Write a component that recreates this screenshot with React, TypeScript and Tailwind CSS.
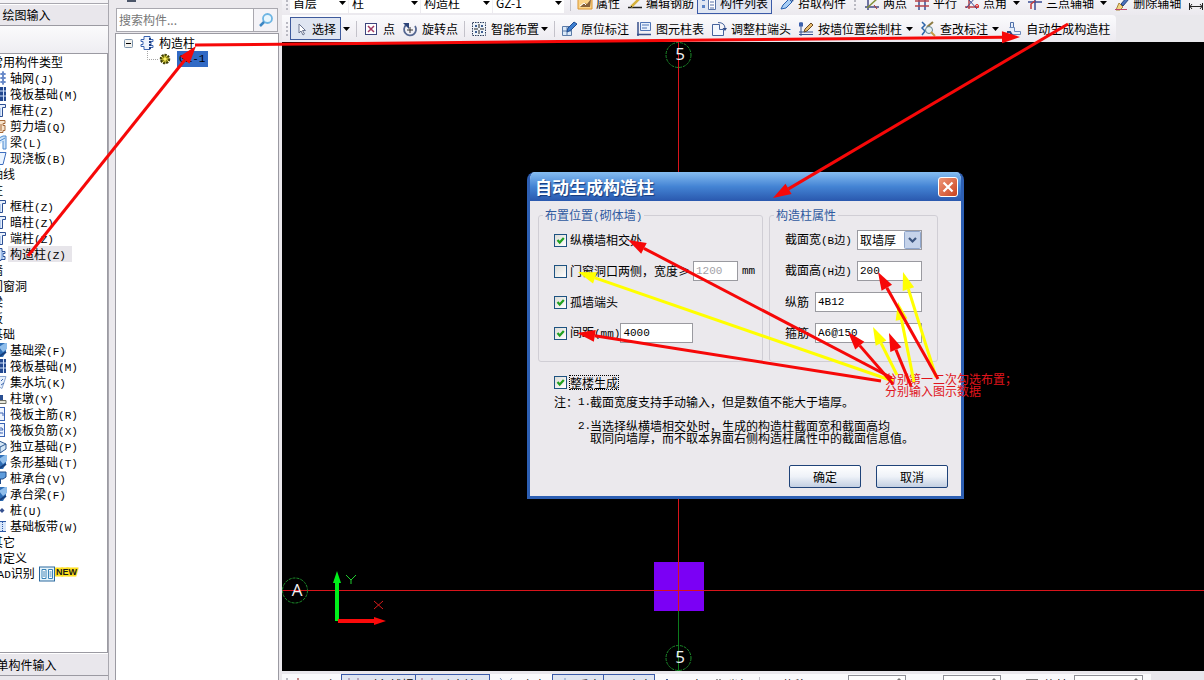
import React from "react";

type IconName =
  | "grid" | "slab" | "column" | "wall" | "beam" | "plate" | "struct" | "solid" | "pit" | "pier"
  | "bar" | "bar2" | "iso" | "cap" | "pile" | "band";

type Row = { text: string; keyName?: string; icon?: IconName; selected?: boolean; isNew?: boolean };

const ROWS: Row[] = [
  { text: "常用构件类型" },
  { text: "轴网", keyName: "J", icon: "grid" },
  { text: "筏板基础", keyName: "M", icon: "slab" },
  { text: "框柱", keyName: "Z", icon: "column" },
  { text: "剪力墙", keyName: "Q", icon: "wall" },
  { text: "梁", keyName: "L", icon: "beam" },
  { text: "现浇板", keyName: "B", icon: "plate" },
  { text: "轴线" },
  { text: "柱" },
  { text: "框柱", keyName: "Z", icon: "column" },
  { text: "暗柱", keyName: "Z", icon: "column" },
  { text: "端柱", keyName: "Z", icon: "column" },
  { text: "构造柱", keyName: "Z", icon: "struct", selected: true },
  { text: "墙" },
  { text: "门窗洞" },
  { text: "梁" },
  { text: "板" },
  { text: "基础" },
  { text: "基础梁", keyName: "F", icon: "solid" },
  { text: "筏板基础", keyName: "M", icon: "slab" },
  { text: "集水坑", keyName: "K", icon: "pit" },
  { text: "柱墩", keyName: "Y", icon: "pier" },
  { text: "筏板主筋", keyName: "R", icon: "bar" },
  { text: "筏板负筋", keyName: "X", icon: "bar2" },
  { text: "独立基础", keyName: "P", icon: "iso" },
  { text: "条形基础", keyName: "T", icon: "solid" },
  { text: "桩承台", keyName: "V", icon: "cap" },
  { text: "承台梁", keyName: "F", icon: "solid" },
  { text: "桩", keyName: "U", icon: "pile" },
  { text: "基础板带", keyName: "W", icon: "band" },
  { text: "其它" },
  { text: "自定义" },
  { text: "识别", isNew: true },
];

function Svg({ children, className = "" }: { children: React.ReactNode; className?: string }) {
  return (
    <svg viewBox="0 0 16 16" className={"size-4 shrink-0 " + className} fill="none" aria-hidden="true">
      {children}
    </svg>
  );
}

function TreeIcon({ name }: { name: IconName }) {
  switch (name) {
    case "grid":
      return <Svg><path d="M4 1v14M8 1v14M12 1v14M2 4h13M2 8h13M2 12h13" stroke="#3f68b8" /><path d="M11 3h2v2h-2zM11 7h2v2h-2zM11 11h2v2h-2z" stroke="#3f68b8" fill="#dbe6fa" /></Svg>;
    case "slab":
      return <Svg><rect x="1" y="1" width="14" height="14" fill="#23488f" /><path d="M4 1v14M8.500 1v14M12.500 1v14M1 5h14M1 10h14" stroke="#cfe0fb" /></Svg>;
    case "column":
      return <Svg><path d="M2.500 2.500h12v3h-3v9h-5v-9h-4z" fill="#e8f0fc" stroke="#2c4f94" /><path d="M9 6v8" stroke="#7ea5e0" /></Svg>;
    case "wall":
      return <Svg><path d="M2 2.500h12v3h-2v2h2v5h-2v2H2z" fill="#f7e3cc" stroke="#a4683a" /><path d="M10 6v7" stroke="#a4683a" /></Svg>;
    case "beam":
      return <Svg><path d="M4 15V6l8-4h3v13h-3V7" fill="#cfe4f9" stroke="#4c8ad0" /><path d="M5 9l9-5" stroke="#4c8ad0" /></Svg>;
    case "plate":
      return <Svg><path d="M3 2.500h12l-3 12H3z" fill="#eaf4ff" stroke="#3c6dbe" /></Svg>;
    case "struct":
      return <Svg><path d="M5 2.500h6v3h3v2h-2v3h2v3h-4v1H5v-3H2v-4h3z" fill="#cfe1f8" stroke="#2c5298" /><path d="M8 4v10M11 6v7" stroke="#6e97d8" /></Svg>;
    case "solid":
      return <Svg><path d="M1 1h14v9l-3 5H4z" fill="#2f6fb7" /><path d="M8 5l6-4h2v6l-4 3z" fill="#8fbdea" /><path d="M9 14l6-4" stroke="#173f7c" strokeWidth="2" /></Svg>;
    case "pit":
      return <Svg><path d="M4 2.500h11l-4 12-7-4z" fill="#e6effb" stroke="#8aa4cf" /><path d="M12 5l-2 2M13 9l-3 2" stroke="#3b65ad" /></Svg>;
    case "pier":
      return <Svg><path d="M7 5h5v5H7z" fill="#2a4f92" /><path d="M2 10.500h13v3H2z" fill="#e8e8dc" stroke="#6d6f66" /></Svg>;
    case "bar":
      return <Svg><rect x="1.500" y="1.500" width="12" height="13" fill="#edf4fe" stroke="#3a63b4" /><path d="M8 9V7h4v3" stroke="#3a63b4" /></Svg>;
    case "bar2":
      return <Svg><rect x="1.500" y="1.500" width="12" height="13" fill="#edf4fe" stroke="#3a63b4" /><path d="M7 6h4l1 2H8l1 3h3" stroke="#3a63b4" /></Svg>;
    case "iso":
      return <Svg><path d="M2 8l4-6 9 4v5l-6 4-7-4z" fill="#d3e6f6" stroke="#2b5790" /><path d="M9 15V9l6-3M9 9L4 5" stroke="#2b5790" /></Svg>;
    case "cap":
      return <Svg><path d="M2 4l3-2h10v5l-3 2H2z" fill="#5d9bdb" stroke="#1f4a88" /><path d="M5 9v5M9 9v5" stroke="#1f4a88" strokeWidth="2" /></Svg>;
    case "pile":
      return <Svg><path d="M11 6l2.500 2.500L11 11 8.500 8.500z" fill="#35508f" /></Svg>;
    case "band":
      return <Svg><rect x="1" y="3" width="14" height="11" fill="#d9e7fa" /><path d="M8 3.500h7M8 13.500h7" stroke="#2f5aa8" /><path d="M11.500 4v9" stroke="#2f5aa8" strokeDasharray="1 1" /></Svg>;
  }
}

const MONO = "font-['Liberation_Mono','Noto_Sans_CJK_SC',monospace] text-[11px]";

function Caret({ className = "" }: { className?: string }) {
  return (
    <svg viewBox="0 0 7 4" className={"h-1 w-[7px] shrink-0 " + className} aria-hidden="true">
      <path d="M0 0h7L3.500 4z" fill="#000" />
    </svg>
  );
}

function Grip() {
  return (
    <svg viewBox="0 0 4 16" className="h-4 w-1 shrink-0" aria-hidden="true">
      <path d="M1 1h2v2H1zM1 5h2v2H1zM1 9h2v2H1zM1 13h2v2H1z" fill="#b9b9c2" />
    </svg>
  );
}

function Sep() {
  return <span className="-mx-px h-4 w-px shrink-0 bg-[#c3c2ca]" />;
}

function Tool({ icon, label, caret, wide }: { icon: React.ReactNode; label: string; caret?: string; wide?: boolean }) {
  return (
    <button type="button" className={"flex shrink-0 items-center whitespace-nowrap " + (wide ? "gap-1" : "gap-[3px]")}>
      <Svg>{icon}</Svg>
      <span>{label}</span>
      {caret && <Caret className={caret} />}
    </button>
  );
}

function TopSelect({ label, value, className }: { label: string; value: string; className: string }) {
  return (
    <span className={"grid shrink-0 items-center bg-white " + className}>
      <select aria-label={label} className="col-start-1 row-start-1 h-5 w-full appearance-none bg-transparent pl-[3px] outline-none">
        <option>{value}</option>
      </select>
      <Caret className="pointer-events-none col-start-1 row-start-1 mr-0.5 justify-self-end" />
    </span>
  );
}

function TopBar() {
  return (
    <div className="flex h-[15px] flex-col justify-end overflow-hidden bg-linear-to-b from-[#f4f3f7] to-[#ebe9ee] pb-px">
      <div className="flex h-[22px] shrink-0 items-center gap-[7px] pl-[3px]">
        <div className="flex items-center gap-px">
          <Grip />
          <TopSelect label="楼层" value="首层" className="w-[58px]" />
          <TopSelect label="构件类别" value="柱" className="w-[71px]" />
          <TopSelect label="构件类型" value="构造柱" className="w-[71px]" />
          <TopSelect label="构件" value="GZ-1" className="w-[71px]" />
        </div>
        <Sep />
        <Tool label="属性" icon={<><path d="M1 3h14v11H1z" fill="#fbd489" stroke="#d99430" /><path d="M3 12l4-4 3 1 4-5-1 8z" fill="#86603a" /><path d="M3 11l4-3 2 2" stroke="#fff" /></>} />
        <Tool label="编辑钢筋" icon={<><path d="M1 12.500h14" stroke="#222" strokeWidth="1.500" /><path d="M4 12l8-8" stroke="#d6b23c" strokeWidth="2.500" /><path d="M3 13l2-2" stroke="#222" /></>} />
        <button type="button" className="-ml-1 flex h-[22px] shrink-0 items-center gap-[3px] border border-[#3a5aa8] bg-[#e0e6f2] px-[3px] whitespace-nowrap">
          <Svg><path d="M1 3h3v3H1zM1 10h3v3H1z" fill="#5b83c6" /><path d="M7.500 1.500h7v13h-7z" fill="#fff" stroke="#5873a8" /><path d="M9 4h4M9 7h4M9 10h4M9 13h4" stroke="#5873a8" /></Svg>
          <span>构件列表</span>
        </button>
        <Tool label="拾取构件" icon={<><path d="M2 14l2-4 6-6 3 3-6 6z" fill="#a8cdf4" stroke="#275fae" /><path d="M9 2l5 5 1-4-3-2z" fill="#234b8d" /></>} />
        <Grip />
        <Tool label="两点" icon={<><path d="M4 1v14M1 12h14" stroke="#434a86" strokeWidth="1.500" /><path d="M3 13L14 3" stroke="#83913a" strokeWidth="1.500" /><path d="M10 10l3 4" stroke="#b0342d" /></>} />
        <Tool label="平行" icon={<><path d="M5 1v14M11 1v14" stroke="#3a4c93" strokeWidth="1.500" /><path d="M1 6h14M1 11h14" stroke="#b8434a" strokeWidth="1.500" /></>} />
        <Tool label="点角" caret="ml-[3px]" icon={<><path d="M1 12h14M5 1v13" stroke="#b8434a" strokeWidth="1.500" /><path d="M2 13L12 2M5 5l8 9" stroke="#3a4c93" /><circle cx="13" cy="11" r="1.500" stroke="#d22" /></>} />
        <Tool label="三点辅轴" caret="ml-[3px]" icon={<><path d="M1 7h14M8 2v13" stroke="#3a4c93" strokeWidth="1.500" /><path d="M4 14V9l4-3" stroke="#c33a3a" strokeWidth="1.500" /></>} />
        <Tool label="删除辅轴" icon={<><path d="M7 9l6-7 2 2-6 7z" fill="#4a72bb" stroke="#243f7d" /><path d="M5 8l4 4-3 3H2z" fill="#f3d483" stroke="#a5843b" /><path d="M1 14.500h12" stroke="#c0476c" /></>} />
        <Svg><path d="M1.500 8v7M14.500 8v7M2 11.500h12" stroke="#222" /><path d="M4 9l-2 2.500L4 14M12 9l2 2.500L12 14" stroke="#222" /><path d="M1 4h3M11 4h3" stroke="#45a049" strokeWidth="2" /></Svg>
      </div>
    </div>
  );
}

function ToolBar() {
  return (
    <div className="flex h-[27px] items-center bg-[#e9e8ec]">
      <div className="flex h-full shrink-0 items-center gap-[7px] rounded-r-sm bg-linear-to-b from-[#fbfbfd] to-[#eceaf0] pr-1.5 pl-[3px]">
        <div className="flex items-center">
          <Grip />
          <button type="button" className="ml-px flex h-[23px] w-[51px] items-center gap-[3px] border border-[#3e5a9c] bg-[#dfe5f1] pl-0.5">
            <Svg><path d="M6 3v9l2-2 2 4 1.500-1-2-3.500h3z" fill="#fff" stroke="#6b7590" /></Svg>
            <span>选择</span>
          </button>
          <Caret className="ml-0.5" />
        </div>
        <Sep />
        <Tool wide label="点" icon={<><rect x="2.500" y="2.500" width="11" height="11" fill="#fff" stroke="#3c447d" /><path d="M5 5l6 6M11 5l-6 6" stroke="#a13a63" strokeWidth="1.500" /></>} />
        <Tool wide label="旋转点" icon={<><path d="M4 4a6 6 0 1 0 9 1" stroke="#566892" strokeWidth="1.800" /><path d="M1 2h6v6z" fill="#2c4479" /><path d="M8 6v6M5 9h6" stroke="#333" /></>} />
        <Sep />
        <Tool wide label="智能布置" caret="-ml-0.5" icon={<><rect x="1.500" y="1.500" width="13" height="13" fill="#eef3f8" stroke="#2f3e5c" strokeDasharray="1.500 1" /><path d="M8 3v4M8 9v4M3 8h4M9 8h4" stroke="#222" /><path d="M4 4h2v2H4zM10 4h2v2h-2zM4 10h2v2H4zM10 10h2v2h-2z" fill="#3f5f93" /></>} />
        <Sep />
        <Tool wide label="原位标注" icon={<><path d="M1.500 5.500h9v9h-9zM1.500 10h9M6 5.500v9" fill="#dbe9f8" stroke="#5b7ba8" /><path d="M6 11l1-4 6-6 3 2-6 6z" fill="#3e7fd0" stroke="#1f4c91" /></>} />
        <Tool wide label="图元柱表" icon={<><path d="M2 1v14M1 13.500h14" stroke="#37508a" strokeWidth="1.500" /><path d="M4.500 1.500h10v8h-10z" fill="#e8f1fd" stroke="#4f74b5" /><path d="M6 4h7M6 7h5" stroke="#4f74b5" /></>} />
        <Tool wide label="调整柱端头" icon={<><path d="M1.500 3.500h7v5h4v6h-11z" fill="#f3f7fd" stroke="#46639d" /><path d="M7 1.500q7 0 7 6" stroke="#46639d" /><path d="M11.500 7l2.500 3 2-3z" fill="#2e4a88" /></>} />
        <Tool wide label="按墙位置绘制柱" caret="ml-0" icon={<><path d="M3 1v14M1 13.500h14M1 11h14" stroke="#35508f" /><path d="M1 1.500h4v4H1z" fill="#3c62ae" /><path d="M6 11l1-3 6-6 2 2-6 6z" fill="#e8bd6f" stroke="#6a4a24" /></>} />
        <Tool wide label="查改标注" caret="ml-0" icon={<><path d="M2 1l3 3-3 3 3 3-3 4" stroke="#2d65a8" strokeWidth="1.500" /><path d="M7 6l6-5" stroke="#8d7c43" strokeWidth="2" /><circle cx="9" cy="9" r="3.500" fill="#e5f1f4" stroke="#5f7f8f" /><path d="M11 11l4 4" stroke="#c59c45" strokeWidth="2" /></>} />
        <Tool wide label="自动生成构造柱" icon={<><path d="M4.500 9.500v-8h3v8z" fill="#e7effb" stroke="#4f6fa8" /><path d="M3.500 6.500h5v4h6v3h-10" fill="#e7effb" stroke="#6d8abb" /><path d="M1 11h3l2 3" stroke="#28457e" strokeWidth="2" /></>} />
      </div>
    </div>
  );
}

function Spin({ label, className }: { label: string; className: string }) {
  return (
    <span className={"flex h-5 shrink-0 justify-end border border-[#8f9097] bg-white " + className}>
      <input aria-label={label} className="min-w-0 flex-1 outline-none" />
      <svg viewBox="0 0 12 16" className="h-4 w-3" aria-hidden="true"><path d="M3 5l3-3 3 3z" fill="#777" /></svg>
    </span>
  );
}

function BottomBar() {
  const box = "-ml-px flex h-[22px] shrink-0 items-center gap-1 border border-[#3a5aa8] bg-[#dfe5f1] px-1";
  return (
    <div className="h-[9px] overflow-hidden bg-[#e9e7ec] pt-[3px]">
      <div className="flex h-[22px] w-[869px] items-center bg-[#fafafc] pl-[3px] whitespace-nowrap">
        <Grip />
        <span className="flex w-[53px] shrink-0 items-center gap-1 pl-1">
          <Svg><path d="M1 4h14M5 1v14" stroke="#c48787" strokeWidth="2" /></Svg>正交
        </span>
        <button type="button" className={box + " w-[75px]"}><Svg><path d="M3 1v14M12 1v14M1 8h14" stroke="#8d6f94" /></Svg>对象捕捉</button>
        <button type="button" className={box + " w-[75px]"}><Svg><path d="M2 1v14M12 1v14" stroke="#a56a80" /></Svg>动态输入</button>
        <span className="flex w-[63px] shrink-0 items-center gap-2 pl-2"><Svg><path d="M2 1l12 14M14 1L2 15" stroke="#7c97c4" /></Svg>交点</span>
        <button type="button" className={box + " w-[52px]"}><Svg><path d="M8 1v13M2 14h12" stroke="#7c97c4" /></Svg>垂点</button>
        <button type="button" className={box + " w-[52px]"}><Svg><path d="M2 9h12" stroke="#7c97c4" /></Svg>中点</button>
        <span className="flex w-[52px] shrink-0 items-center gap-1 pl-1"><Svg><path d="M8 2l5 7H3z" stroke="#35508f" fill="#7c97c4" /></Svg>顶点</span>
        <span className="flex w-[52px] shrink-0 items-center gap-1"><Svg><path d="M3 3l3 3M10 2v8M12 3h2" stroke="#333" /></Svg>坐标</span>
        <span className="h-4 w-px shrink-0 bg-[#c3c2ca]" />
        <span className="w-[88px] shrink-0 pl-2.5">不偏移</span>
        <Spin label="X" className="w-[58px]" />
        <span className="w-[37px] shrink-0" />
        <Spin label="Y" className="w-[58px]" />
        <label className="flex w-[73px] shrink-0 items-center gap-1.5 pl-[25px]">
          <input type="checkbox" className="size-3 appearance-none border border-[#777]" />旋转
        </label>
        <Spin label="角度" className="w-[69px]" />
      </div>
    </div>
  );
}

function NavPanel() {
  const tab = "flex shrink-0 items-center justify-center border-y border-t-white border-b-[#9b9aa2] bg-[#e9e7ec]";
  return (
    <nav className="flex w-[109px] shrink-0 justify-end overflow-hidden border-r border-[#a9a8af]">
      <div className="flex w-[163px] shrink-0 flex-col bg-[#e9e7ec]">
        <div className="h-[4px] shrink-0 border-b border-[#a9a8af] bg-[#f4f3f6]" />
        <button type="button" className={tab + " h-[22px]"}>绘图输入</button>
        <div className="h-[27px] shrink-0 bg-linear-to-b from-[#fbfbfc] to-[#eeedf2]" />
        <ul className="min-h-0 flex-1 overflow-hidden border border-[#9b9aa2] bg-white pl-[45px]">
          {ROWS.map((r, i) => (
            <li key={i} className="flex h-4 items-center whitespace-nowrap">
              {r.icon && <TreeIcon name={r.icon} />}
              <span className={r.icon ? "ml-px h-4 pr-1.5 pl-0.5 leading-4 " + (r.selected ? "bg-[#e7e5ea]" : "") : "leading-4"}>
                {r.isNew && <span className={MONO}>CAD</span>}
                {r.text}
                {r.keyName && <span className={MONO}>({r.keyName})</span>}
              </span>
              {r.isNew && (
                <>
                  <Svg className="ml-1"><rect x=".5" y="1" width="15" height="14" fill="#e6f4fb" stroke="#2c6a9f" /><path d="M3 3.500h4v9H3zM9.500 3.500h4v9h-4z" fill="#fff" stroke="#3b84b8" /><path d="M4 6h2M4 8h2M4 10h2M10.500 6h2M10.500 8h2M10.500 10h2" stroke="#3b84b8" /></Svg>
                  <svg viewBox="0 0 24 12" className="h-3 w-6 self-start" role="img" aria-label="NEW">
                    <text x="1" y="9" fontFamily="Liberation Sans, sans-serif" fontSize="9" fontWeight="700" fill="#1a1a1a" stroke="#ffe11f" strokeWidth="3" paintOrder="stroke">NEW</text>
                  </svg>
                </>
              )}
            </li>
          ))}
        </ul>
        <button type="button" className={tab + " h-[23px]"}>单构件输入</button>
        <div className="h-1 shrink-0" />
      </div>
    </nav>
  );
}

function ComponentPanel() {
  return (
    <aside className="ml-1.5 flex w-[164px] shrink-0 flex-col">
      <div className="flex h-2 shrink-0 items-start pl-3">
        <svg viewBox="0 0 9 2" className="h-0.5 w-[9px]" aria-hidden="true"><path d="M0 0h9v2H0z" fill="#4b5568" /></svg>
      </div>
      <div className="mx-px flex h-6 shrink-0 border border-[#a9a8af]">
        <input aria-label="搜索构件" placeholder="搜索构件..." className="min-w-0 flex-1 bg-white px-0.5 outline-none placeholder:text-[#777]" />
        <button type="button" aria-label="搜索" className="flex w-6 items-center justify-center border-l border-[#a9a8af] bg-[#f4f3f7]">
          <Svg><circle cx="9.500" cy="6.500" r="4.500" fill="#e8f6fd" stroke="#6db5e3" strokeWidth="1.800" /><path d="M6 10l-4 4" stroke="#3c87c4" strokeWidth="2.500" /></Svg>
        </button>
      </div>
      <div className="mt-px min-h-0 flex-1 border-x border-t border-[#9b9aa2] bg-white pt-px">
        <div className="flex h-4 items-center pl-2">
          <svg viewBox="0 0 9 9" className="size-[9px]" aria-hidden="true"><rect x=".5" y=".5" width="8" height="8" rx="1" fill="#f3f2ee" stroke="#7c93ab" /><path d="M2 4.500h5" stroke="#000" /></svg>
          <Svg className="ml-1.5"><path d="M5 1.500h6v3h3v2h-2v4h2v2h-3v2H5v-3H2v-2h2v-3H2v-2h3z" fill="#eef4fd" stroke="#3a63b0" /><path d="M11 3v11" stroke="#1f3f80" strokeDasharray="2 1" strokeWidth="2" /></Svg>
          <span className="ml-1">构造柱</span>
        </div>
        <div className="flex h-4 items-center pl-[31px]">
          <svg viewBox="0 0 12 16" className="h-4 w-3" aria-hidden="true"><path d="M.5 0v8.500H12" stroke="#a5a5a5" strokeDasharray="1 1" fill="none" /></svg>
          <svg viewBox="0 0 12 12" className="size-3" aria-hidden="true"><circle cx="6" cy="6" r="4" fill="#fff04a" stroke="#3b3a08" strokeWidth="2.500" strokeDasharray="2 1" /><path d="M6 1v10M1 6h10M2.500 2.500l7 7M9.500 2.500l-7 7" stroke="#6b6a12" strokeWidth=".8" /><circle cx="6" cy="6" r="1.500" fill="#fff36b" /></svg>
          <span className={"ml-1.5 h-4 w-[31px] bg-[#316ac5] pl-0.5 leading-4 " + MONO}>GZ-1</span>
        </div>
      </div>
    </aside>
  );
}

function Check({ label, defaultChecked, focus }: { label: React.ReactNode; defaultChecked?: boolean; focus?: boolean }) {
  return (
    <label className="flex items-center gap-[3px] whitespace-nowrap">
      <span className="grid">
        <input type="checkbox" defaultChecked={defaultChecked} className="peer col-start-1 row-start-1 size-[13px] appearance-none border border-[#1d5281] bg-linear-to-br from-[#dcdcd7] to-white" />
        <svg viewBox="0 0 13 13" className="pointer-events-none invisible col-start-1 row-start-1 size-[13px] peer-checked:visible" aria-hidden="true">
          <path d="M3.500 6l2.200 2.500L9.800 4" stroke="#21a121" strokeWidth="2.200" fill="none" />
        </svg>
      </span>
      <span className={focus ? "outline-1 outline-dotted outline-black" : ""}>{label}</span>
    </label>
  );
}

const FIELD = "h-5 border border-[#9a9aa0] bg-white px-0.5 outline-none " + MONO;

function Dialog() {
  const btn = "h-[23px] w-[72px] rounded-[2px] border border-[#1f4379] bg-linear-to-b from-white via-[#eef2f8] to-[#c3cfe2]";
  const group = "rounded-[3px] border border-[#d0ced5]";
  const legend = "ml-1 h-[14px] px-0.5 leading-[14px] text-[#2f5a9f]";
  return (
    <section role="dialog" aria-labelledby="dialog-title" className="absolute top-[130px] left-[245px] flex w-[437px] flex-col overflow-hidden rounded-t-lg border-x-[3px] border-b-[3px] border-[#2d5fb3] bg-[#ebe9ed]">
      <header className="-mx-[3px] flex h-[29px] items-center justify-between bg-linear-to-b from-[#86bdf0] via-[#4484d4] to-[#2a58ae] pr-1.5 pl-2">
        <h1 id="dialog-title" className="text-[17px] leading-5 font-bold text-white [text-shadow:1px_1px_1px_#163a7c]">自动生成构造柱</h1>
        <button type="button" aria-label="关闭" className="flex size-5 items-center justify-center rounded-[3px] border border-white bg-linear-to-br from-[#ee9677] to-[#c8401a]">
          <svg viewBox="0 0 12 12" className="size-3" aria-hidden="true"><path d="M1.500 1.500l9 9M10.500 1.500l-9 9" stroke="#fff" strokeWidth="2.200" /></svg>
        </button>
      </header>
      <div className="px-2 pt-[7px] pb-2">
        <div className="flex gap-1.5">
          <fieldset className={group + " w-[225px]"}>
            <legend className={legend}>布置位置<span className={MONO}>(</span>砌体墙<span className={MONO}>)</span></legend>
            <div className="flex flex-col gap-[11px] pt-2 pb-[18px] pl-[15px]">
              <div className="flex h-5 items-center"><Check defaultChecked label="纵横墙相交处" /></div>
              <div className="flex h-5 items-center">
                <Check label="门窗洞口两侧，宽度≥" />
                <input aria-label="洞口宽度" disabled defaultValue="1200" className={"ml-[3px] w-[45px] text-[#a3a2a8] " + FIELD} />
                <span className={"ml-1 " + MONO}>mm</span>
              </div>
              <div className="flex h-5 items-center"><Check defaultChecked label="孤墙端头" /></div>
              <div className="flex h-5 items-center">
                <Check defaultChecked label={<>间距<span className={MONO}>(mm)</span></>} />
                <input aria-label="间距" defaultValue="4000" className={"w-[73px] " + FIELD} />
              </div>
            </div>
          </fieldset>
          <fieldset className={group + " w-[169px]"}>
            <legend className={legend}>构造柱属性</legend>
            <div className="flex flex-col gap-[11px] pt-2 pr-[15px] pl-[15px]">
              <div className="flex h-5 items-center justify-between">
                <label htmlFor="bw">截面宽<span className={MONO}>(B边)</span></label>
                <span className="grid w-[65px]">
                  <select id="bw" className="col-start-1 row-start-1 h-5 w-full appearance-none border border-[#9a9aa0] bg-white pl-0.5 outline-none">
                    <option>取墙厚</option>
                  </select>
                  <svg viewBox="0 0 17 18" className="pointer-events-none col-start-1 row-start-1 mr-px h-[18px] w-[17px] self-center justify-self-end" aria-hidden="true">
                    <rect x=".5" y=".5" width="16" height="17" rx="1" fill="#c5d3ea" stroke="#8ea5cb" />
                    <path d="M5 7l3.500 3.500L12 7" stroke="#3c557f" strokeWidth="2.200" fill="none" />
                  </svg>
                </span>
              </div>
              <div className="flex h-5 items-center justify-between">
                <label htmlFor="hh">截面高<span className={MONO}>(H边)</span></label>
                <input id="hh" defaultValue="200" className={"w-[65px] " + FIELD} />
              </div>
              <div className="flex h-5 items-center justify-between">
                <label htmlFor="zj">纵筋</label>
                <input id="zj" defaultValue="4B12" className={"w-[107px] " + FIELD} />
              </div>
              <div className="flex h-5 items-center justify-between">
                <label htmlFor="gj">箍筋</label>
                <input id="gj" defaultValue="A6@150" className={"w-[107px] " + FIELD} />
              </div>
            </div>
          </fieldset>
        </div>
        <div className="mt-3 flex h-4 items-center pl-4 leading-[13px]"><Check defaultChecked focus label="整楼生成" /></div>
        <div className="mt-1.5 grid grid-cols-[24px_12px_1fr] gap-y-3 pl-4 leading-3 whitespace-nowrap">
          <span>注：</span>
          <span className={MONO}>1.</span>
          <span>截面宽度支持手动输入，但是数值不能大于墙厚。</span>
          <span className={"col-start-2 " + MONO}>2.</span>
          <p>当选择纵横墙相交处时，生成的构造柱截面宽和截面高均<br />取同向墙厚，而不取本界面右侧构造柱属性中的截面信息值。</p>
        </div>
        <div className="mt-[21px] flex justify-end gap-[15px] pr-[5px]">
          <button type="button" className={btn}>确定</button>
          <button type="button" className={btn}>取消</button>
        </div>
      </div>
    </section>
  );
}

function Canvas() {
  return (
    <main className="relative min-h-0 flex-1 overflow-hidden bg-black">
      <svg width="100%" height="100%" className="block" aria-label="绘图区">
        <rect x="372" y="520" width="50" height="49" fill="#7b00f5" />
        <path d="M396.500 0V569M0 548.500H2000" stroke="#d8141b" />
        <path d="M396.500 569V629" stroke="#0c7a1c" />
        <g fill="none" stroke="#1c8a2a" strokeDasharray="3 1">
          <circle cx="396.500" cy="13" r="12.500" />
          <circle cx="13" cy="548.500" r="12.500" />
          <circle cx="396.500" cy="616" r="12.500" />
        </g>
        <g fill="#f2f2f2" fontFamily="Open Sans, sans-serif" fontSize="17" textAnchor="middle">
          <text x="398" y="18">5</text>
          <text x="15" y="554">A</text>
          <text x="398" y="621">5</text>
        </g>
        <path d="M55 579V540" stroke="#00f01a" strokeWidth="4" />
        <path d="M55 529l4 12h-8z" fill="#00f01a" />
        <path d="M56 579h38" stroke="#fb0a0a" strokeWidth="4" />
        <path d="M104 579l-12-4v8z" fill="#fb0a0a" />
        <path d="M64 533l5 5 5-5M69 538v4" stroke="#1fce2e" fill="none" />
        <path d="M92 559l9 8M101 559l-9 8" stroke="#d81c1c" />
      </svg>
      <Dialog />
    </main>
  );
}

type Line = [number, number, number, number];

const RED: Line[] = [
  [28, 256, 196, 46],
  [195, 45, 1020, 37],
  [1068, 24, 773, 198],
  [892, 378, 628, 240],
  [881, 381, 577, 333],
  [893, 384, 848, 332],
  [911, 386, 889, 333],
  [938, 379, 878, 272],
];
const YELLOW: Line[] = [
  [893, 381, 578, 272],
  [897, 375, 873, 327],
  [914, 382, 898, 302],
  [936, 377, 903, 272],
];

function Arrow({ line, color }: { line: Line; color: string }) {
  const [x1, y1, x2, y2] = line;
  const d = Math.hypot(x2 - x1, y2 - y1);
  const ux = (x2 - x1) / d;
  const uy = (y2 - y1) / d;
  const bx = x2 - ux * 18;
  const by = y2 - uy * 18;
  return (
    <g>
      <line x1={x1} y1={y1} x2={bx} y2={by} stroke={color} strokeWidth="3" />
      <polygon points={`${x2},${y2} ${bx - uy * 6},${by + ux * 6} ${bx + uy * 6},${by - ux * 6}`} fill={color} />
    </g>
  );
}

function Annotations() {
  return (
    <svg width="100%" height="100%" className="pointer-events-none absolute inset-0">
      <g fill="#e0141c" fontSize="12" fontFamily="Noto Sans CJK SC, sans-serif">
        <text x="885" y="384">分别第一二次勾选布置；</text>
        <text x="885" y="396">分别输入图示数据</text>
      </g>
      {YELLOW.map((l, i) => <Arrow key={i} line={l} color="#ffff00" />)}
      {RED.map((l, i) => <Arrow key={i} line={l} color="#f60808" />)}
    </svg>
  );
}

export default function App() {
  return (
    <div className="relative flex h-screen overflow-hidden bg-[#ebe9ed] font-['Noto_Sans_CJK_SC',sans-serif] text-xs leading-4 text-black">
      <NavPanel />
      <ComponentPanel />
      <div className="ml-[3px] flex min-w-0 flex-1 flex-col overflow-hidden">
        <TopBar />
        <ToolBar />
        <Canvas />
        <BottomBar />
      </div>
      <Annotations />
    </div>
  );
}
